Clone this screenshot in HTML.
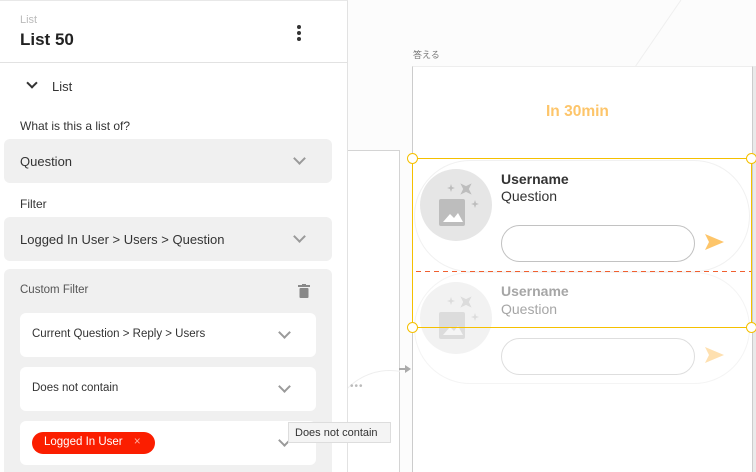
<!DOCTYPE html>
<html style="width:756px;height:472px;overflow:hidden"><head><meta charset="utf-8"><style>
*{box-sizing:border-box;margin:0;padding:0}
body{width:756px;height:472px;overflow:hidden;background:#fcfcfc;font-family:"Liberation Sans","Noto Sans CJK JP",sans-serif;position:relative}
.a{position:absolute}
.panel{left:0;top:0;width:348px;height:472px;background:#fff;border-right:1px solid #e2e2e2;border-top:1px solid #e8e8e8;overflow:hidden}
.sel{background:#f0f0f0;border-radius:6px}
.wbox{background:#fff;border-radius:6px}
.chev{width:9px;height:9px;border-right:2px solid #9a9a9a;border-bottom:2px solid #9a9a9a;transform:rotate(45deg)}
.t{color:#333}
</style></head><body>
<div class="a" style="left:347px;top:150px;width:53px;height:322px;border-top:1px solid #d4d4d4;border-right:1px solid #d4d4d4;background:#fff"></div>
<div class="a" style="left:330px;top:370px;width:70px;height:102px;overflow:hidden"><div style="width:120px;height:150px;border:1px solid #eee;border-radius:60px"></div></div>
<div class="a" style="left:350px;top:381px;color:#bbb;font-size:10px;letter-spacing:1px">•••</div>
<div class="a" style="left:399px;top:368px;width:8px;height:2px;background:#aaa"></div>
<div class="a" style="left:405px;top:365px;width:0;height:0;border-left:6px solid #aaa;border-top:4px solid transparent;border-bottom:4px solid transparent"></div>
<div class="a" style="left:752px;top:66px;width:4px;height:406px;background:#eaeaea"></div>
<svg class="a" style="left:560px;top:0" width="196" height="70"><line x1="121" y1="0" x2="75" y2="67" stroke="#efefef" stroke-width="1"/></svg>

<div class="a panel">
<div class="a" style="left:20px;top:13px;font-size:11px;color:#bbb">List</div>
<div class="a t" style="left:20px;top:29px;font-size:17px;font-weight:bold;color:#222">List 50</div>
<div class="a" style="left:297px;top:24px;width:4px;height:4px;border-radius:2px;background:#333;box-shadow:0 6px 0 #333,0 12px 0 #333"></div>
<div class="a" style="left:0;top:61px;width:348px;height:1px;background:#e2e2e2"></div>
<div class="a" style="left:28px;top:78px;width:8px;height:8px;border-right:2px solid #333;border-bottom:2px solid #333;transform:rotate(45deg)"></div>
<div class="a t" style="left:52px;top:78px;font-size:13px">List</div>
<div class="a t" style="left:20px;top:118px;font-size:12px">What is this a list of?</div>
<div class="a sel" style="left:4px;top:138px;width:328px;height:44px"></div>
<div class="a t" style="left:20px;top:153px;font-size:13px">Question</div>
<div class="a chev" style="left:295px;top:153px"></div>
<div class="a t" style="left:20px;top:196px;font-size:12px">Filter</div>
<div class="a sel" style="left:4px;top:216px;width:328px;height:44px"></div>
<div class="a t" style="left:20px;top:231px;font-size:13px">Logged In User &gt; Users &gt; Question</div>
<div class="a chev" style="left:295px;top:231px"></div>
<div class="a sel" style="left:4px;top:268px;width:328px;height:204px;border-radius:6px 6px 0 0"></div>
<div class="a" style="left:20px;top:283px;font-size:11.5px;color:#555">Custom Filter</div>
<svg class="a" style="left:298px;top:283px" width="12" height="14"><rect x="0" y="1" width="12" height="2" fill="#888"/><rect x="4" y="0" width="4" height="2" fill="#888"/><rect x="1.5" y="4" width="9" height="10" rx="1" fill="#888"/></svg>
<div class="a wbox" style="left:20px;top:312px;width:296px;height:44px"></div>
<div class="a t" style="left:32px;top:327px;font-size:11.5px">Current Question &gt; Reply &gt; Users</div>
<div class="a chev" style="left:280px;top:327px"></div>
<div class="a wbox" style="left:20px;top:366px;width:296px;height:44px"></div>
<div class="a t" style="left:32px;top:381px;font-size:11.5px">Does not contain</div>
<div class="a chev" style="left:280px;top:381px"></div>
<div class="a wbox" style="left:20px;top:420px;width:296px;height:44px"></div>
<div class="a" style="left:32px;top:431px;width:123px;height:22px;border-radius:11px;background:#fb1e00;color:#fff;font-size:11.5px;padding:4px 0 0 12px">Logged In User <span style="margin-left:8px;color:#ffb0a0">×</span></div>
<div class="a chev" style="left:280px;top:435px"></div>
</div>
<div class="a" style="left:288px;top:422px;width:103px;height:21px;background:#f4f4f4;border:1px solid #ddd;font-size:11px;color:#333;padding:4px 0 0 6px">Does not contain</div>

<div class="a" style="left:413px;top:48px;font-size:9px;color:#777">答える</div>
<div class="a" style="left:412px;top:66px;width:341px;height:406px;background:#fff;border-left:1px solid #ccc;border-right:1px solid #ccc;border-top:1px solid #eee"></div>
<div class="a" style="left:546px;top:103px;font-size:15.5px;font-weight:bold;color:#fdc56a">In 30min</div>
<div class="a" style="left:414px;top:160px;width:336px;height:112px;border:1px solid #f1f1f1;border-radius:56px"></div>
<div class="a" style="left:420px;top:169px;width:72px;height:72px;border-radius:36px;background:#e6e6e6"></div>
<svg class="a" style="left:420px;top:169px" width="72" height="72"><rect x="19" y="30" width="26" height="27" rx="2" fill="#bdbdbd"/><path d="M23 53 L30 45 L34 49 L38 44 L43 53Z" fill="#fff"/><path d="M46 12 L48 18 L54 20 L48 22 L46 28 L44 22 L38 20 L44 18Z" fill="#bdbdbd" transform="rotate(45 46 20)"/><path d="M31 15 l1 3 3 1 -3 1 -1 3 -1 -3 -3 -1 3 -1z" fill="#bdbdbd"/><path d="M55 31 l1 3 3 1 -3 1 -1 3 -1 -3 -3 -1 3 -1z" fill="#bdbdbd"/></svg>
<div class="a" style="left:501px;top:171px;font-size:14px;font-weight:bold;color:#333">Username</div>
<div class="a" style="left:501px;top:188px;font-size:14px;color:#333">Question</div>
<div class="a" style="left:501px;top:225px;width:194px;height:37px;border:1px solid #c2c2c2;border-radius:19px"></div>
<svg class="a" style="left:705px;top:234px" width="20" height="16"><path d="M0 0 L19 8 L0 16 L4 8Z" fill="#fdc56a"/></svg>
<div class="a" style="left:416px;top:271px;width:336px;height:1.3px;background:repeating-linear-gradient(90deg,#f06030 0 5px,transparent 5px 9px)"></div>
<div class="a" style="left:414px;top:272px;width:336px;height:112px;border:1px solid #f4f4f4;border-radius:56px"></div>
<div class="a" style="left:420px;top:282px;width:72px;height:72px;border-radius:36px;background:#f2f2f2"></div>
<svg class="a" style="left:420px;top:282px" width="72" height="72"><rect x="19" y="30" width="26" height="27" rx="2" fill="#dcdcdc"/><path d="M23 53 L30 45 L34 49 L38 44 L43 53Z" fill="#f5f5f5"/><path d="M46 12 L48 18 L54 20 L48 22 L46 28 L44 22 L38 20 L44 18Z" fill="#dcdcdc" transform="rotate(45 46 20)"/><path d="M31 15 l1 3 3 1 -3 1 -1 3 -1 -3 -3 -1 3 -1z" fill="#dcdcdc"/><path d="M55 31 l1 3 3 1 -3 1 -1 3 -1 -3 -3 -1 3 -1z" fill="#dcdcdc"/></svg>
<div class="a" style="left:501px;top:283px;font-size:14px;font-weight:bold;color:#a6a6a6">Username</div>
<div class="a" style="left:501px;top:301px;font-size:14px;color:#a6a6a6">Question</div>
<div class="a" style="left:501px;top:338px;width:194px;height:37px;border:1px solid #dedede;border-radius:19px"></div>
<svg class="a" style="left:705px;top:347px" width="20" height="16"><path d="M0 0 L19 8 L0 16 L4 8Z" fill="#fee0b0"/></svg>
<div class="a" style="left:412px;top:158px;width:340px;height:170px;border:1.3px solid #f5c000"></div>
<div class="a" style="left:407px;top:153px;width:11px;height:11px;border-radius:6px;border:1.5px solid #f5c000;background:#fff"></div>
<div class="a" style="left:746px;top:153px;width:11px;height:11px;border-radius:6px;border:1.5px solid #f5c000;background:#fff"></div>
<div class="a" style="left:407px;top:322px;width:11px;height:11px;border-radius:6px;border:1.5px solid #f5c000;background:#fff"></div>
<div class="a" style="left:746px;top:322px;width:11px;height:11px;border-radius:6px;border:1.5px solid #f5c000;background:#fff"></div>
</body></html>
